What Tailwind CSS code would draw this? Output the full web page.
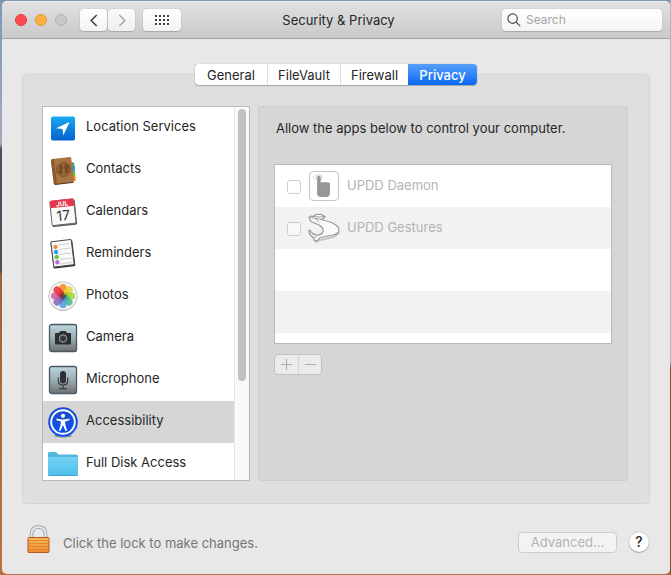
<!DOCTYPE html>
<html lang="en">
<head>
    <meta charset="UTF-8">
    <meta name="viewport" content="width=device-width, initial-scale=1.0">
    <title>Security &amp; Privacy</title>
    <script src="https://cdn.jsdelivr.net/npm/@tailwindcss/browser@4"></script>
</head>
<body class="[background:linear-gradient(to_bottom,#b5b5b5_63%,#8a4f2e_64%)_right/1px_100%_no-repeat,linear-gradient(to_bottom,#7f96b4_0%,#a3abba_25%,#4c4b5e_26%,#55495a_47%,#9c6338_48%,#b8743f_100%)] min-h-screen flex font-[Inter,sans-serif] text-[13px] leading-4 text-[#262626] pt-px pb-px pl-0.5 pr-px">
    <div class="flex-1 flex flex-col bg-[#e8e8e8] rounded-[5px] overflow-hidden">

        <!-- Title bar -->
        <header class="grid grid-cols-[1fr_auto_1fr] items-center h-[38px] pl-[13px] pr-2 bg-linear-to-b from-[#e1e1e1] to-[#c9c9c9] border-t border-t-[#f0f0f0] border-b border-b-[#a3a3a3]">
            <div class="flex items-center">
                <div class="flex gap-2">
                    <button type="button" aria-label="Close" class="size-3 rounded-full bg-[#fc4b50] border border-[#e0383e]"></button>
                    <button type="button" aria-label="Minimize" class="size-3 rounded-full bg-[#fdb143] border border-[#dd9433]"></button>
                    <button type="button" aria-label="Zoom" disabled class="size-3 rounded-full bg-[#c8c8c8] border border-[#b2b2b2]"></button>
                </div>
                <div class="flex gap-px ml-[13px]">
                    <button type="button" aria-label="Back" class="flex items-center justify-center w-[27px] h-[22px] rounded bg-linear-to-b from-white to-[#f3f3f3] shadow-[0_0_1px_#999,0_1px_1px_#aaa]">
                        <svg width="8" height="13" viewBox="0 0 8 13" fill="none" stroke="#404040" stroke-width="1.5"><path d="M6.700 1 1.200 6.500l5.500 5.500"/></svg>
                    </button>
                    <button type="button" aria-label="Forward" disabled class="flex items-center justify-center w-[27px] h-[22px] rounded bg-linear-to-b from-[#fafafa] to-[#f0f0f0] shadow-[0_0_1px_#999,0_1px_1px_#aaa]">
                        <svg width="8" height="13" viewBox="0 0 8 13" fill="none" stroke="#a6a6a6" stroke-width="1.5"><path d="m1.300 1 5.500 5.500L1.300 12"/></svg>
                    </button>
                </div>
                <button type="button" aria-label="Show All" class="flex items-center justify-center ml-2 w-[38px] h-[22px] rounded bg-linear-to-b from-white to-[#f3f3f3] shadow-[0_0_1px_#999,0_1px_1px_#aaa]">
                    <svg width="14" height="10" viewBox="0 0 14 10" stroke="#404040" stroke-width="2" stroke-dasharray="2 2"><path d="M0 1h14M0 5h14M0 9h14"/></svg>
                </button>
            </div>
            <h1>Security &amp; Privacy</h1>
            <label class="justify-self-end flex items-center gap-[5px] w-[160px] h-[22px] pl-[5px] rounded bg-linear-to-b from-white to-[#f4f4f4] shadow-[0_0_1px_#999,0_1px_1px_#aaa]">
                <svg class="shrink-0" width="14" height="14" viewBox="0 0 14 14" fill="none" stroke="#505050" stroke-width="1.2"><circle cx="5.600" cy="5.600" r="4.700"/><path d="m9 9 4.200 4.200"/></svg>
                <input type="search" aria-label="Search" placeholder="Search" class="min-w-0 flex-1 text-xs outline-none placeholder:text-[#a6a6a6]">
            </label>
        </header>

        <main class="flex-1 flex flex-col px-5 pt-[25px]">
            <!-- Tabs -->
            <div role="tablist" class="relative self-center flex h-[21px] -mb-[11px] rounded bg-white shadow-[0_0_1px_#888,0_1px_1px_#aaa]">
                <button type="button" role="tab" class="w-[72px]">General</button>
                <button type="button" role="tab" class="w-[73px] border-l border-[#dcdcdc]">FileVault</button>
                <button type="button" role="tab" class="w-[68px] border-l border-[#dcdcdc]">Firewall</button>
                <button type="button" role="tab" aria-selected="true" class="w-[69px] rounded-r font-medium text-white bg-linear-to-b from-[#559ff9] to-[#0068f4]">Privacy</button>
            </div>

            <div class="flex gap-2 items-stretch pl-[19px] pr-[21px] pt-[31px] pb-[22px] bg-[#dfdfdf] border border-[#d4d4d4] rounded">
                <!-- Services -->
                <div class="flex w-[208px] h-[375px] shrink-0 bg-white border border-[#b9b9b9] overflow-hidden">
                    <ul class="flex-1">
                        <li><button type="button" class="flex items-center gap-2 w-full h-[42px] pl-[5px] text-left">
                            <svg width="30" height="32" viewBox="0 0 30 32">
                                <defs><linearGradient id="loc" x2="0" y2="1"><stop stop-color="#19a9f5"/><stop offset="1" stop-color="#0560cd"/></linearGradient></defs>
                                <rect x="3" y="4.500" width="24" height="24" rx="2" fill="url(#loc)"/>
                                <path d="M21.500 10 8 16.200l6.500.8.8 6.500z" fill="#fff"/>
                            </svg>
                            <span class="pb-1">Location Services</span>
                        </button></li>
                        <li><button type="button" class="flex items-center gap-2 w-full h-[42px] pl-[5px] text-left">
                            <svg width="30" height="32" viewBox="0 0 30 32">
                                <path d="m23 8 3 .5 1 6-3 1z" fill="#5a9b6b"/><path d="m24 12 3 .5v6h-3z" fill="#1ba5d8"/><path d="m24 17 3 .5.500 4-3 1z" fill="#6cc04a"/><path d="m24 22 3.500 0 .5 4.500-3 1z" fill="#f29a2e"/>
                                <path d="m6 29.500 19-1.700.5 1.200L7 31z" fill="#e8e0d4"/>
                                <path d="M4 5 22 3q1 0 1.200 1L26 27q0 1-1 1.200L7 30.500q-1 0-1.200-1L3 7q0-2 1-2z" fill="#a97441"/>
                                <path d="M4 5.500 6 5l3 25-2 .5q-1 0-1.200-1L3 7z" fill="#8a5a2e"/>
                                <path d="M7 30.500 25.500 28.300" stroke="#55351a" stroke-width="1"/>
                                <circle cx="15.500" cy="15.500" r="7" fill="#98663a" stroke="#7f512a"/>
                                <path d="M12 11q3-1 3 2 0 2-1 3v4l-4-1q0-2 2-3-2-4 0-5zM18 10.500q3-1 3 2 0 2-1 3l1 3-4 1v-4q-2-4 1-5z" fill="#784a24"/>
                            </svg>
                            <span class="pb-1">Contacts</span>
                        </button></li>
                        <li><button type="button" class="flex items-center gap-2 w-full h-[42px] pl-[5px] text-left">
                            <svg width="30" height="32" viewBox="0 0 30 32">
                                <g transform="rotate(-6 15 17)">
                                    <rect x="3" y="5" width="25" height="25" rx="1.500" fill="#555b61"/>
                                    <rect x="3" y="4" width="24" height="24.500" rx="1.500" fill="#fafafa" stroke="#66696c"/>
                                    <path d="M3 5q0-1.500 1.500-1.500h21Q27 3.500 27 5v6H3z" fill="#e6364b"/>
                                    <text x="15" y="10" font-size="6.500" font-weight="700" fill="#fff" text-anchor="middle">JUL</text>
                                    <text x="15" y="24.500" font-size="14" fill="#333" text-anchor="middle">17</text>
                                </g>
                            </svg>
                            <span class="pb-1">Calendars</span>
                        </button></li>
                        <li><button type="button" class="flex items-center gap-2 w-full h-[42px] pl-[5px] text-left">
                            <svg width="30" height="32" viewBox="0 0 30 32">
                                <g transform="rotate(-7 15 17)">
                                    <rect x="4" y="3" width="22" height="26.500" rx="1.500" fill="#333"/>
                                    <rect x="4.500" y="2.500" width="20.500" height="25.500" rx="1" fill="#f8f8f8" stroke="#4a4a4a"/>
                                    <path d="M11 6.500h12M11 11h12M11 16h12M11 21h12M11 25.500h12" stroke="#c2c2c2" stroke-width=".7"/>
                                    <circle cx="8.500" cy="8" r="2.200" fill="#f5883b"/><circle cx="8.500" cy="13.200" r="2.200" fill="#279fe8"/><circle cx="8.500" cy="18.300" r="2.200" fill="#5ac940"/><circle cx="8.500" cy="23.500" r="2.200" fill="#ba6ad5"/>
                                </g>
                            </svg>
                            <span class="pb-1">Reminders</span>
                        </button></li>
                        <li><button type="button" class="flex items-center gap-2 w-full h-[42px] pl-[5px] text-left">
                            <svg width="30" height="32" viewBox="0 0 30 32">
                                <circle cx="15" cy="16.700" r="14.200" fill="#bcbcbc"/>
                                <circle cx="15" cy="16" r="14.300" fill="#f3f3f3" stroke="#bababa" stroke-width=".8"/>
                                <g transform="translate(15 16)" fill-opacity=".85">
                                    <rect x="-3.600" y="-12" width="7.200" height="11.500" rx="3.600" fill="#f78a1c"/>
                                    <rect x="-3.600" y="-12" width="7.200" height="11.500" rx="3.600" fill="#ecd029" transform="rotate(45)"/>
                                    <rect x="-3.600" y="-12" width="7.200" height="11.500" rx="3.600" fill="#a4d22f" transform="rotate(90)"/>
                                    <rect x="-3.600" y="-12" width="7.200" height="11.500" rx="3.600" fill="#41b78d" transform="rotate(135)"/>
                                    <rect x="-3.600" y="-12" width="7.200" height="11.500" rx="3.600" fill="#4b9fe3" transform="rotate(180)"/>
                                    <rect x="-3.600" y="-12" width="7.200" height="11.500" rx="3.600" fill="#8065bd" transform="rotate(225)"/>
                                    <rect x="-3.600" y="-12" width="7.200" height="11.500" rx="3.600" fill="#ce5c9f" transform="rotate(270)"/>
                                    <rect x="-3.600" y="-12" width="7.200" height="11.500" rx="3.600" fill="#ea2c32" transform="rotate(315)"/>
                                    <path d="m0-5 1 3.500L4-4 2-1l3 1-3 1 2 3-3-2-1 3-1-3-3 2 2-3-3-1 3-1-2-3 3 2.500z" fill="#2c2433" fill-opacity=".6"/>
                                </g>
                            </svg>
                            <span class="pb-1">Photos</span>
                        </button></li>
                        <li><button type="button" class="flex items-center gap-2 w-full h-[42px] pl-[5px] text-left">
                            <svg width="30" height="32" viewBox="0 0 30 32">
                                <defs><linearGradient id="metal" x2="0" y2="1"><stop stop-color="#bdd5df"/><stop offset=".5" stop-color="#9caeb4"/><stop offset="1" stop-color="#6e706d"/></linearGradient></defs>
                                <rect x="1.500" y="2.500" width="27" height="27" rx="2" fill="url(#metal)" stroke="#4c5964" stroke-width="1.300"/>
                                <path d="M7.500 11.500h3.500l1.500-2h5l1.500 2h3.500v10.500h-15z" fill="#2b2f31" stroke="#2b2f31" stroke-linejoin="round"/>
                                <circle cx="15" cy="16.500" r="3.700" fill="#35393b" stroke="#a4adb0" stroke-width="1"/>
                            </svg>
                            <span class="pb-1">Camera</span>
                        </button></li>
                        <li><button type="button" class="flex items-center gap-2 w-full h-[42px] pl-[5px] text-left">
                            <svg width="30" height="32" viewBox="0 0 30 32">
                                <rect x="1.500" y="2.500" width="27" height="27" rx="2" fill="url(#metal)" stroke="#4c5964" stroke-width="1.300"/>
                                <rect x="12" y="7" width="6" height="12.500" rx="3" fill="#2f3336"/>
                                <path d="M10.300 13.500V17q0 4 4.700 4t4.700-4v-3.500M15 21v3.500M11 24.700h8" fill="none" stroke="#2f3336" stroke-width="1.100"/>
                            </svg>
                            <span class="pb-1">Microphone</span>
                        </button></li>
                        <li class="bg-[#d6d6d6]"><button type="button" class="flex items-center gap-2 w-full h-[42px] pl-[5px] text-left">
                            <svg width="30" height="32" viewBox="0 0 30 32">
                                <defs><linearGradient id="acc" x2="0" y2="1"><stop stop-color="#1b4fc8"/><stop offset="1" stop-color="#0a50f5"/></linearGradient></defs>
                                <ellipse cx="15" cy="30" rx="9" ry="1.500" fill="#8a8a8a"/>
                                <circle cx="15" cy="16" r="14.800" fill="url(#acc)"/>
                                <circle cx="15" cy="16" r="11.800" fill="url(#acc)" stroke="#fff" stroke-width="1.900"/>
                                <circle cx="15" cy="9.800" r="2.100" fill="#fff"/>
                                <path d="M8.500 12.500q3.500 1 6.500 1t6.500-1v1.700l-4.500 1.300q.2 4.500 2.200 9l-1.700.5-2.500-6-2.500 6-1.700-.5q2-4.500 2.200-9l-4.500-1.300z" fill="#fff"/>
                            </svg>
                            <span class="pb-1">Accessibility</span>
                        </button></li>
                        <li><button type="button" class="flex items-center gap-2 w-full h-[42px] pl-[5px] text-left">
                            <svg width="30" height="32" viewBox="0 0 30 32">
                                <defs><linearGradient id="folder" x2="0" y2="1"><stop stop-color="#73d3f7"/><stop offset="1" stop-color="#4fbfec"/></linearGradient></defs>
                                <path d="M0 27V5.500Q0 4 1.500 4H8l2.500 2.500H28q2 0 2 1.500v19z" fill="#52b6dd"/>
                                <path d="M0 9h30v17.500q0 1-1 1H1q-1 0-1-1z" fill="url(#folder)"/>
                                <path d="M.5 27.500h29" stroke="#3fa4cf"/>
                            </svg>
                            <span class="pb-1">Full Disk Access</span>
                        </button></li>
                    </ul>
                    <div class="w-[15px] pl-[3px] pt-0.5 bg-[#fafafa] border-l border-[#e5e5e5]">
                        <div class="w-2 h-[272px] rounded-full bg-[#c1c1c1]"></div>
                    </div>
                </div>

                <!-- Apps -->
                <section class="flex-1 px-[15px] pt-[13px] bg-[#d6d6d6] border border-[#cdcdcd] rounded-[3px]">
                    <p class="pl-0.5">Allow the apps below to control your computer.</p>
                    <div class="mt-7 h-[180px] bg-white border border-[#b9b9b9] overflow-hidden text-[#b3b3b3]">
                        <table class="w-full">
                            <tbody>
                                <tr class="h-[42px]">
                                    <td class="p-0">
                                        <label class="flex items-center pl-3">
                                            <input type="checkbox" disabled class="appearance-none size-3.5 mt-0.5 rounded-[3px] border border-[#cfcfcf] bg-white">
                                            <svg class="mx-2" width="30" height="30" viewBox="0 0 30 30">
                                                <rect x=".5" y=".5" width="29" height="29" rx="3.500" fill="#fff" stroke="#c4c4c4"/>
                                                <circle cx="10" cy="6.500" r="2.800" fill="none" stroke="#bdbdbd" stroke-width=".8"/>
                                                <path d="m4 5 1.500 1.500L4 8M6 4l1 1M6 9l1-1" fill="none" stroke="#ccc" stroke-width=".8"/>
                                                <path d="M8.200 6.500q0-1.700 1.700-1.700t1.700 1.700v5q1-.8 2 0 1.300-.8 2.400 0 1.300-.8 2.400 0 2.600-.8 2.600 1.500v9q0 4-4 4h-5q-4 0-4-4z" fill="#979797"/>
                                            </svg>
                                            <span class="pb-0.5">UPDD Daemon</span>
                                        </label>
                                    </td>
                                </tr>
                                <tr class="h-[42px] bg-[#f1f3f2]">
                                    <td class="p-0">
                                        <label class="flex items-center pl-3">
                                            <input type="checkbox" disabled class="appearance-none size-3.5 mt-0.5 rounded-[3px] border border-[#cfcfcf] bg-[#f7f8f8]">
                                            <svg class="mx-[7px]" width="32" height="30" viewBox="0 0 32 30" stroke-linejoin="round" stroke-linecap="round">
                                                <path d="M8 29l4-2 14-3 5-4" fill="none" stroke="#c4c4c4" stroke-width="2"/>
                                                <path d="M1 4.500 3 8.500l8 3.500q5 3 4 6.500-1 3.500-6 3.500-3 0-5-2L2 17 .7 17.500l1.300 4 3.500 3.500L6.500 28l3.500-1 2-2.500 13-2.500q6-1.500 6-5 0-3-4-5.500-4-3-11-4l-2-1L17 3.500 13 1.300 8 1.500 5 3.500 3 3z" fill="#fafafa" stroke="#969696" stroke-width="1.200"/>
                                                <path d="M3 4.500l5 1L14 6.500M5 3.500l7 .5 5-.5M8 6l3 3M6 25l3-2" fill="none" stroke="#969696" stroke-width=".9"/>
                                            </svg>
                                            <span class="pb-0.5">UPDD Gestures</span>
                                        </label>
                                    </td>
                                </tr>
                                <tr class="h-[42px]"><td></td></tr>
                                <tr class="h-[42px] bg-[#f1f3f2]"><td></td></tr>
                            </tbody>
                        </table>
                    </div>
                    <div class="inline-flex mt-2.5 h-[21px] rounded bg-[#ebebeb] border border-[#c2c2c2]">
                        <button type="button" aria-label="Add" disabled class="flex items-center justify-center w-[23px]">
                            <svg width="11" height="11" viewBox="0 0 11 11" stroke="#adadad"><path d="M0 5.500h11M5.500 0v11"/></svg>
                        </button>
                        <button type="button" aria-label="Remove" disabled class="flex items-center justify-center w-[23px] border-l border-[#d5d5d5]">
                            <svg width="11" height="11" viewBox="0 0 11 11" stroke="#adadad"><path d="M0 5.500h11"/></svg>
                        </button>
                    </div>
                </section>
            </div>

            <!-- Footer -->
            <footer class="flex items-center pl-1 pr-px mt-5">
                <button type="button" class="flex items-center gap-3 text-[#757575]">
                    <svg width="25" height="32" viewBox="0 0 25 32">
                        <defs><linearGradient id="lock" x2="0" y2="1"><stop stop-color="#f9b65b"/><stop offset="1" stop-color="#ee8a2c"/></linearGradient></defs>
                        <path d="M5.500 16V10.500Q5.500 3 12.500 3t7 7.500V16" fill="none" stroke="#8b979d" stroke-width="3.600"/>
                        <path d="M5.500 16V10.500Q5.500 3 12.500 3t7 7.500V16" fill="none" stroke="#e4ecef" stroke-width="2"/>
                        <rect x="2" y="13.500" width="21" height="15" rx="1" fill="url(#lock)" stroke="#b4571e"/>
                        <path d="M3 16.500h19M3 19.500h19M3 22.500h19M3 25.500h19" stroke="#dd832f" stroke-width=".8"/>
                    </svg>
                    <span class="pt-1.5">Click the lock to make changes.</span>
                </button>
                <button type="button" disabled class="ml-auto mt-1 w-[99px] h-[21px] rounded bg-[#f3f3f3] border border-[#cdcdcd] text-[#b4b4b4] leading-[19px]">Advanced...</button>
                <button type="button" aria-label="Help" class="ml-3 mt-1 size-5 rounded-full bg-white shadow-[0_0_1px_#888,0_1px_1px_#aaa] text-sm leading-5 font-medium">?</button>
            </footer>
        </main>
    </div>
</body>
</html>
